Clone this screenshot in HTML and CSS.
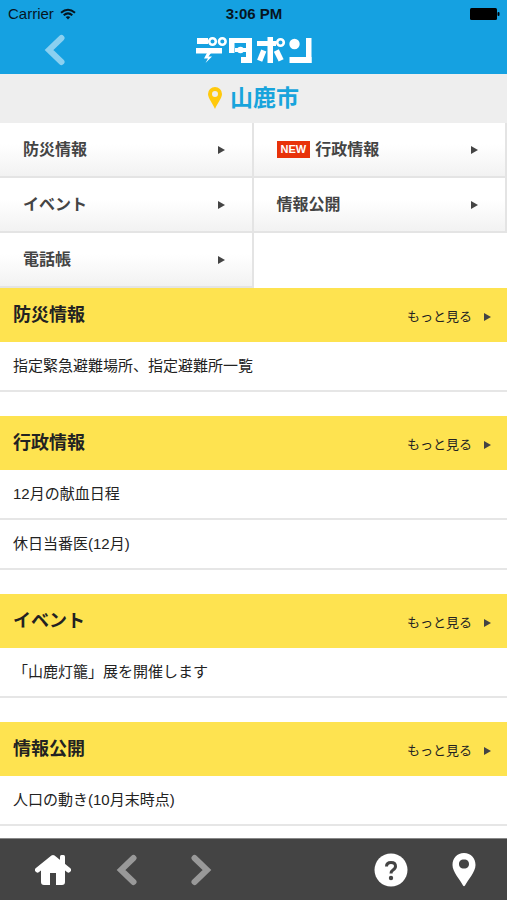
FILE: index.html
```
<!DOCTYPE html>
<html lang="ja">
<head>
<meta charset="utf-8">
<meta name="viewport" content="width=device-width, initial-scale=1">
<title>デタポン - 山鹿市</title>
<link rel="stylesheet" href="styles.css">
</head>
<body>
<header class="top">
  <div class="status">
    <div class="carrier">
      <span>Carrier</span>
      <svg class="wifi" viewBox="0 0 16 12" aria-hidden="true">
        <g fill="none" stroke="currentColor" stroke-width="2">
          <path d="M1 4.800Q8-1.400 15 4.800"/>
          <path d="M3.700 7.300Q8 3.500 12.300 7.300"/>
        </g>
        <path d="M8 11.500L5.700 9.100Q8 7.300 10.300 9.100Z" fill="currentColor"/>
      </svg>
    </div>
    <span class="clock">3:06 PM</span>
    <svg class="battery" viewBox="0 0 30 12" aria-hidden="true">
      <rect x="0" y="0" width="27" height="12" rx="1.500"/>
      <rect x="27.500" y="4" width="2" height="4" rx="1"/>
    </svg>
  </div>
  <div class="brand">
    <button class="back" type="button" aria-label="戻る">
      <svg class="chevron" viewBox="0 0 22 32"><path d="M17.500 4L5 16L17.500 28"/></svg>
    </button>
    <svg class="logo" viewBox="0 0 118 28" role="img" aria-label="デタポン">
      <g fill="currentColor">
        <rect x="2" y="2" width="11" height="6"/>
        <rect x="1" y="12" width="26" height="5.500"/>
        <path d="M12 17L9 22.500H13L10.500 27L17 20.500H13.500L16 17Z"/>
        <rect x="34" y="2" width="23" height="5"/>
        <rect x="34" y="2" width="5.500" height="15"/>
        <rect x="51" y="2" width="6" height="25"/>
        <rect x="46" y="21" width="11" height="6"/>
        <rect x="40" y="12" width="11" height="4"/>
        <circle cx="45.500" cy="14" r="3.300"/>
        <rect x="62" y="5" width="19" height="5"/>
        <rect x="72.500" y="1" width="5.500" height="26"/>
        <rect x="64" y="14" width="5.500" height="11" transform="rotate(22 66.500 19.500)"/>
        <rect x="81" y="14" width="5.500" height="11" transform="rotate(-26 83.500 19.500)"/>
        <circle cx="99.500" cy="8" r="5.200"/>
        <rect x="111" y="2" width="5.500" height="25"/>
        <rect x="94.500" y="21" width="22" height="6"/>
      </g>
      <g fill="none" stroke="currentColor" stroke-width="2.600">
        <circle cx="17.500" cy="5.500" r="3.300"/>
        <circle cx="27.300" cy="5.500" r="3.300"/>
        <circle cx="85.500" cy="6.500" r="3.300"/>
      </g>
    </svg>
  </div>
</header>

<main>
  <h1 class="city">
    <svg class="city-pin" viewBox="0 0 14 22" aria-hidden="true">
      <path fill-rule="evenodd" d="M7 0A7 7 0 0 1 14 7C14 11 9.500 16 7 22C4.500 16 0 11 0 7A7 7 0 0 1 7 0ZM7 4A3 3 0 1 0 7 10A3 3 0 0 0 7 4Z"/>
    </svg>
    <span>山鹿市</span>
  </h1>

  <nav class="menu" aria-label="カテゴリ">
    <a href="#bousai"><span class="label">防災情報</span><i class="arrow"></i></a>
    <a href="#gyosei"><span class="new">NEW</span><span class="label">行政情報</span><i class="arrow"></i></a>
    <a href="#event"><span class="label">イベント</span><i class="arrow"></i></a>
    <a href="#koukai"><span class="label">情報公開</span><i class="arrow"></i></a>
    <a href="#tel"><span class="label">電話帳</span><i class="arrow"></i></a>
  </nav>

  <section class="group" id="bousai">
    <div class="group-head"><h2>防災情報</h2><a class="more" href="#bousai"><span class="label">もっと見る</span><i class="arrow"></i></a></div>
    <ul><li><a href="#bousai">指定緊急避難場所、指定避難所一覧</a></li></ul>
  </section>
  <section class="group" id="gyosei">
    <div class="group-head"><h2>行政情報</h2><a class="more" href="#gyosei"><span class="label">もっと見る</span><i class="arrow"></i></a></div>
    <ul>
      <li><a href="#gyosei">12月の献血日程</a></li>
      <li><a href="#gyosei">休日当番医(12月)</a></li>
    </ul>
  </section>
  <section class="group" id="event">
    <div class="group-head"><h2>イベント</h2><a class="more" href="#event"><span class="label">もっと見る</span><i class="arrow"></i></a></div>
    <ul><li><a href="#event">「山鹿灯籠」展を開催します</a></li></ul>
  </section>
  <section class="group" id="koukai">
    <div class="group-head"><h2>情報公開</h2><a class="more" href="#koukai"><span class="label">もっと見る</span><i class="arrow"></i></a></div>
    <ul><li><a href="#koukai">人口の動き(10月末時点)</a></li></ul>
  </section>
</main>

<footer class="toolbar">
  <div class="tools">
    <button type="button" aria-label="ホーム">
      <svg class="home" viewBox="0 0 36 32">
        <path d="M2.500 16L18 3.500L33.500 16" fill="none" stroke="currentColor" stroke-width="5" stroke-linecap="round" stroke-linejoin="round"/>
        <path d="M25 2.500Q25 1 26.500 1H28.500Q30 1 30 2.500V13L25 9Z"/>
        <path d="M18 4L30 14V28Q30 31 27 31H21V19H15V31H9Q6 31 6 28V14Z"/>
      </svg>
    </button>
    <button class="dim" type="button" aria-label="前へ">
      <svg class="chevron" viewBox="0 0 22 32"><path d="M17.500 4L5 16L17.500 28"/></svg>
    </button>
    <button class="dim" type="button" aria-label="次へ">
      <svg class="chevron" viewBox="0 0 22 32"><path d="M4.500 4L17 16L4.500 28"/></svg>
    </button>
  </div>
  <div class="tools wide">
    <button type="button" aria-label="ヘルプ">
      <svg class="help" viewBox="0 0 34 34">
        <circle cx="17" cy="17" r="16.500"/>
        <path class="mark" d="M12.500 13.500Q12.500 9.500 17 9.500Q21.500 9.500 21.500 13.200Q21.500 15.500 19 17Q17 18.300 17 20.500"/>
        <circle class="dot" cx="17" cy="25" r="2.200"/>
      </svg>
    </button>
    <button type="button" aria-label="地図">
      <svg class="place" viewBox="0 0 24 34">
        <path fill-rule="evenodd" d="M12 0C19 0 23.500 5 23.500 12C23.500 19 16 26.500 13 32.500Q12 34 11 32.500C8 26.500 0.500 19 0.500 12C0.500 5 5 0 12 0ZM12 6.500C8.500 6.500 7 8.500 7 11C7 13.500 8.500 15.500 12 15.500C15.500 15.500 17 13.500 17 11C17 8.500 15.500 6.500 12 6.500Z"/>
      </svg>
    </button>
  </div>
</footer>
</body>
</html>
```
FILE: styles.css
```
* {
  box-sizing: border-box;
}

body {
  margin: 0;
  padding-bottom: 61px;
  background: #fff;
  color: #222;
  font-family: "Liberation Sans", "Noto Sans CJK JP", sans-serif;
}

a {
  color: inherit;
  text-decoration: none;
}

button {
  display: flex;
  align-items: center;
  justify-content: center;
  padding: 0;
  border: 0;
  background: none;
  color: inherit;
}

svg {
  display: block;
  fill: currentColor;
}

/* Header */
.top {
  height: 74px;
  background: #15a1e1;
}

.status {
  display: grid;
  grid-template-columns: 1fr auto 1fr;
  align-items: center;
  height: 27px;
  padding: 0 7px 0 8px;
  color: #06151f;
  font-size: 15px;
}

.carrier {
  display: flex;
  align-items: center;
  gap: 6px;
}

.wifi {
  width: 16px;
  height: 12px;
}

.clock {
  font-weight: bold;
}

.battery {
  width: 30px;
  height: 12px;
  justify-self: end;
  color: #000;
}

.brand {
  display: grid;
  grid-template-columns: 1fr auto 1fr;
  align-items: center;
  height: 46px;
  color: #fff;
}

.back {
  width: 44px;
  margin-left: 33px;
  color: #8bd0f0;
}

.chevron {
  width: 22px;
  height: 32px;
  fill: none;
  stroke: currentColor;
  stroke-width: 6;
  stroke-linecap: round;
}

.logo {
  width: 118px;
  height: 28px;
}

/* City title */
.city {
  display: flex;
  align-items: center;
  justify-content: center;
  gap: 8px;
  height: 49px;
  margin: 0;
  padding-bottom: 2px;
  background: #eee;
  color: #18a4dc;
  font-size: 23px;
  line-height: 32px;
}

.city-pin {
  width: 14px;
  height: 22px;
  color: #ffc90d;
}

/* Category menu */
.menu {
  display: grid;
  grid-template-columns: 1fr 1fr;
}

.menu a {
  display: flex;
  align-items: center;
  gap: 5px;
  height: 55px;
  padding: 0 27px 0 23px;
  border-right: 2px solid #e4e4e4;
  border-bottom: 2px solid #e4e4e4;
  background: linear-gradient(#fff 40%, #f2f2f2);
  color: #444;
  font-size: 16px;
  font-weight: bold;
}

.label {
  padding-bottom: 4px;
}

.new {
  padding: 0 4px;
  background: #e8320a;
  color: #fff;
  font-size: 11px;
  line-height: 17px;
}

.arrow {
  border-left: 7px solid #444;
  border-top: 4px solid transparent;
  border-bottom: 4px solid transparent;
}

.menu .arrow {
  margin-left: auto;
}

/* News groups */
.group {
  margin-bottom: 24px;
}

.group-head {
  display: flex;
  align-items: center;
  justify-content: space-between;
  height: 54px;
  padding: 0 16px 0 13px;
  background: #fee350;
}

.group h2 {
  margin: 0;
  padding-bottom: 4px;
  font-size: 18px;
}

.more {
  display: flex;
  align-items: center;
  gap: 12px;
  padding-top: 4px;
  font-size: 13px;
}

.group li a {
  display: flex;
  align-items: center;
  height: 50px;
  padding: 0 13px 4px;
  border-bottom: 2px solid #e6e6e6;
  font-size: 15px;
}

.group ul {
  margin: 0;
  padding: 0;
  list-style: none;
}

/* Bottom toolbar */
.toolbar {
  position: fixed;
  right: 0;
  bottom: 0;
  left: 0;
  display: flex;
  justify-content: space-between;
  height: 62px;
  padding: 0 31px 0 35px;
  border-top: 1px solid #888;
  background: #444;
  color: #fff;
}

.tools {
  display: flex;
  align-items: center;
  gap: 38px;
}

.wide {
  gap: 44px;
}

.dim {
  width: 36px;
  color: #999;
}

.home {
  width: 36px;
  height: 32px;
}

.help {
  width: 34px;
  height: 34px;
}

.help .mark {
  fill: none;
  stroke: #444;
  stroke-width: 3;
}

.help .dot {
  fill: #444;
}

.place {
  width: 24px;
  height: 34px;
}
```
